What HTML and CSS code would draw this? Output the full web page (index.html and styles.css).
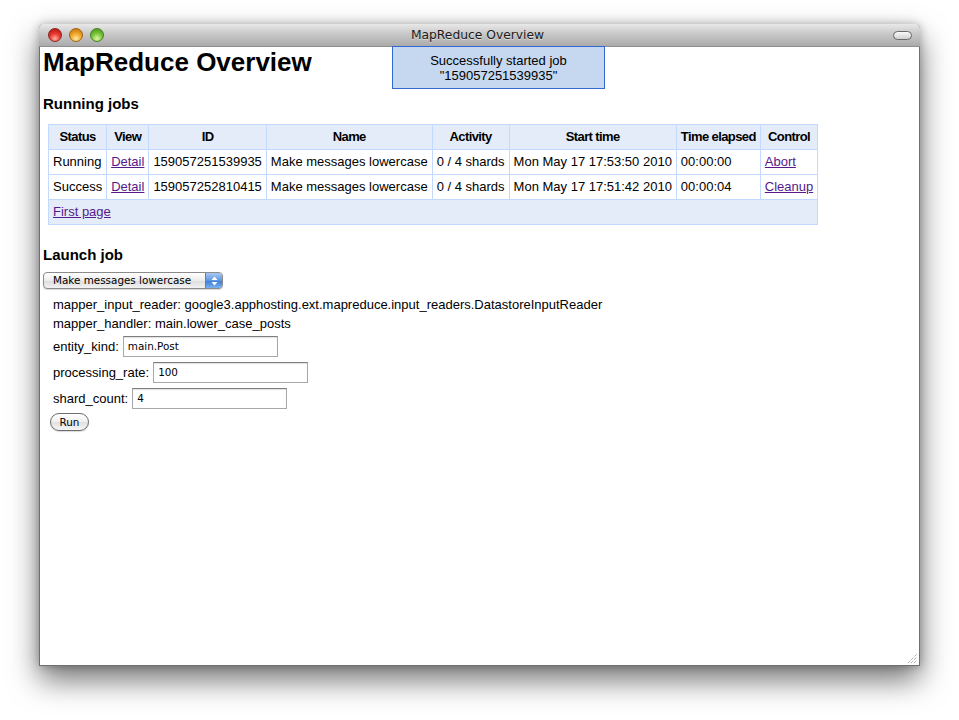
FILE: index.html
```html
<!DOCTYPE html>
<html>
<head>
<meta charset="utf-8">
<title>MapReduce Overview</title>
<link rel="stylesheet" href="styles.css">
</head>
<body>
<div class="desktop">
  <div class="window">
    <div class="titlebar">
      <div class="lights">
        <span class="light red"></span>
        <span class="light yellow"></span>
        <span class="light green"></span>
      </div>
      <div class="title">MapReduce Overview</div>
      <span class="pill"></span>
    </div>
    <div class="content">
      <div class="notice">Successfully started job<br>"159057251539935"</div>
      <h1>MapReduce Overview</h1>
      <h2>Running jobs</h2>
      <table class="jobs">
        <thead>
          <tr>
            <th>Status</th><th>View</th><th>ID</th><th>Name</th><th>Activity</th><th>Start time</th><th>Time elapsed</th><th>Control</th>
          </tr>
        </thead>
        <tbody>
          <tr>
            <td>Running</td><td><a href="#">Detail</a></td><td>159057251539935</td><td>Make messages lowercase</td><td>0 / 4 shards</td><td>Mon May 17 17:53:50 2010</td><td>00:00:00</td><td><a href="#">Abort</a></td>
          </tr>
          <tr>
            <td>Success</td><td><a href="#">Detail</a></td><td>159057252810415</td><td>Make messages lowercase</td><td>0 / 4 shards</td><td>Mon May 17 17:51:42 2010</td><td>00:00:04</td><td><a href="#">Cleanup</a></td>
          </tr>
        </tbody>
        <tfoot>
          <tr><td colspan="8"><a href="#">First page</a></td></tr>
        </tfoot>
      </table>
      <h2 class="launch">Launch job</h2>
      <div class="popup">
        <span class="popup-text">Make messages lowercase</span>
        <span class="popup-arrows">
          <svg width="7" height="10" viewBox="0 0 7 10"><path d="M3.5 0.5 L6.5 4 H0.5 Z M3.5 9.5 L6.5 6 H0.5 Z" fill="#fff"/></svg>
        </span>
      </div>
      <div class="form">
        <div class="info">mapper_input_reader: google3.apphosting.ext.mapreduce.input_readers.DatastoreInputReader</div>
        <div class="info">mapper_handler: main.lower_case_posts</div>
        <div class="row"><span>entity_kind:</span><span class="input">main.Post</span></div>
        <div class="row"><span>processing_rate:</span><span class="input">100</span></div>
        <div class="row"><span>shard_count:</span><span class="input">4</span></div>
        <button class="run" type="button">Run</button>
      </div>
      <svg class="grip" width="11" height="11" viewBox="0 0 11 11">
        <path d="M1 10 L10 1 M4 10 L10 4 M7 10 L10 7" stroke="#8a8a8a" stroke-width="1" stroke-dasharray="1 1"/>
      </svg>
    </div>
  </div>
</div>
</body>
</html>
```
FILE: styles.css
```css
html, body {
  margin: 0;
  padding: 0;
  background: #ffffff;
}

.desktop {
  padding: 24px 0 0 39px;
  min-height: 720px;
  box-sizing: border-box;
}

.window {
  width: 881px;
  height: 642px;
  box-sizing: border-box;
  border: 1px solid #6f6f6f;
  border-top: none;
  border-radius: 5px 5px 0 0;
  box-shadow: 0 14px 30px rgba(0, 0, 0, 0.55), 0 0 10px rgba(0, 0, 0, 0.25);
  display: flex;
  flex-direction: column;
  background: #ffffff;
}

.titlebar {
  height: 23px;
  margin: 0 -1px;
  border-radius: 5px 5px 0 0;
  background: linear-gradient(#e8e8e8, #c8c8c8 45%, #ababab);
  border-bottom: 1px solid #8e8e8e;
  box-sizing: border-box;
  display: flex;
  align-items: center;
  position: relative;
  padding: 0 8px 0 9px;
}

.lights {
  display: flex;
  gap: 7px;
}

.light {
  width: 14px;
  height: 14px;
  border-radius: 50%;
  box-sizing: border-box;
  display: block;
}

.red {
  background: radial-gradient(circle at 50% 80%, #ffb0a4 0, #e8382e 45%, #b00f0f 100%);
  border: 1px solid #8e2520;
}

.yellow {
  background: radial-gradient(circle at 50% 80%, #ffe8a8 0, #f2a82a 45%, #bb6c06 100%);
  border: 1px solid #9d661a;
}

.green {
  background: radial-gradient(circle at 50% 80%, #def9a6 0, #7cc63e 45%, #3f8e14 100%);
  border: 1px solid #4a8022;
}

.title {
  flex: 1;
  text-align: center;
  font-family: "DejaVu Sans", sans-serif;
  font-size: 12.3px;
  color: #1a1a1a;
  padding-right: 42px;
  text-shadow: 0 1px 0 rgba(255, 255, 255, 0.5);
}

.pill {
  width: 19px;
  height: 9px;
  border-radius: 5px;
  border: 1px solid #6a6a6a;
  background: linear-gradient(#fafafa, #cfcfcf);
  box-sizing: border-box;
  display: block;
}

.content {
  flex: 1;
  position: relative;
  padding: 0 3px;
  font-family: "Liberation Sans", Arial, sans-serif;
  font-size: 13px;
  color: #000;
}

.notice {
  position: absolute;
  top: -1px;
  left: 352px;
  width: 211px;
  box-sizing: content-box;
  padding: 6px 0 5px;
  border: 1px solid #3467cf;
  background: #c5d8f0;
  text-align: center;
  line-height: 15px;
}

h1 {
  margin: 0 0 18px;
  font-size: 26px;
  line-height: 30px;
  font-weight: bold;
}

h2 {
  margin: 0 0 12px;
  font-size: 15px;
  line-height: 17px;
  font-weight: bold;
}

h2.launch {
  margin-bottom: 9px;
}

.jobs {
  margin: 0 0 21px 5px;
  border-collapse: collapse;
  border: 1px solid #c3d9ff;
}

.jobs th,
.jobs td {
  border: 1px solid #c3d9ff;
  padding: 4px 4px;
  line-height: 16px;
  white-space: nowrap;
}

.jobs th {
  background: #e5ecf9;
  font-weight: bold;
  text-align: center;
  letter-spacing: -0.6px;
}

.jobs td {
  text-align: left;
  background: #ffffff;
}

.jobs tfoot td {
  background: #e5ecf9;
}

a {
  color: #551a8b;
  text-decoration: underline;
}

.popup {
  width: 180px;
  height: 17px;
  box-sizing: border-box;
  margin-bottom: 6px;
  border: 1px solid #8b8b8b;
  border-radius: 4px;
  background: linear-gradient(#ffffff, #ececec 50%, #dcdcdc 51%, #f2f2f2);
  display: flex;
  align-items: center;
  overflow: hidden;
  box-shadow: 0 1px 1px rgba(0, 0, 0, 0.15);
}

.popup-text {
  flex: 1;
  padding-left: 9px;
  font-family: "DejaVu Sans", sans-serif;
  font-size: 10.4px;
  line-height: 15px;
  color: #000;
}

.popup-arrows {
  width: 16px;
  height: 15px;
  border-left: 1px solid #5a7fb5;
  background: linear-gradient(#a9c8f0, #5d99e3 50%, #3a7bd6 51%, #7ab1ef);
  display: flex;
  align-items: center;
  justify-content: center;
}

.form {
  padding-left: 7px;
}

.info {
  padding-left: 3px;
  line-height: 19px;
}

.row {
  padding-left: 3px;
  height: 26px;
  display: flex;
  align-items: center;
  gap: 4px;
}

.input {
  width: 155px;
  height: 21px;
  box-sizing: border-box;
  border: 1px solid #a8a8a8;
  border-top-color: #7e7e7e;
  box-shadow: inset 0 1px 1px rgba(0, 0, 0, 0.12);
  padding: 0 4px;
  font-family: "DejaVu Sans", sans-serif;
  font-size: 10.4px;
  line-height: 19px;
  background: #fff;
}

.run {
  display: block;
  margin-top: 2px;
  width: 39px;
  height: 18px;
  padding: 0;
  border: 1px solid #6d6d6d;
  border-radius: 9px;
  background: linear-gradient(#ffffff, #f0f0f0 50%, #e0e0e0 51%, #f6f6f6);
  font-family: "DejaVu Sans", sans-serif;
  font-size: 10.4px;
  color: #000;
  box-shadow: 0 1px 1px rgba(0, 0, 0, 0.15);
}

.grip {
  position: absolute;
  right: 1px;
  bottom: 1px;
}
```
